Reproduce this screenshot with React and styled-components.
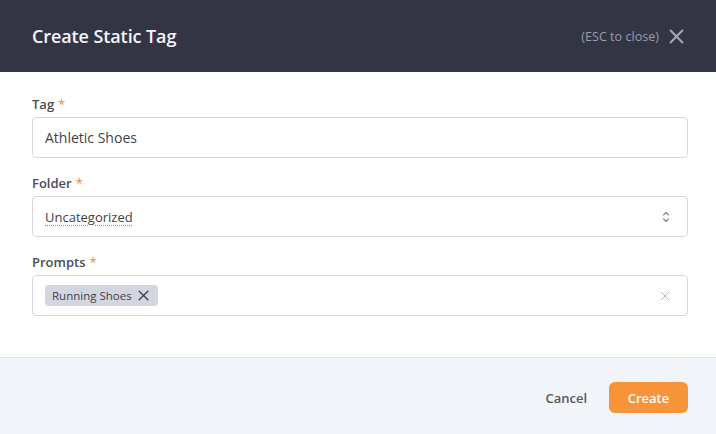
import React from 'react'
import styled, { createGlobalStyle } from 'styled-components'

const GlobalStyle = createGlobalStyle`
  html, body {
    margin: 0;
    padding: 0;
    background: #ffffff;
  }
  body {
    font-family: 'Open Sans', 'Noto Sans', sans-serif;
    -webkit-font-smoothing: antialiased;
  }
`

const Modal = styled.div`
  width: 716px;
  height: 434px;
  display: flex;
  flex-direction: column;
  background: #ffffff;
`

const Header = styled.header`
  height: 72px;
  flex: none;
  display: flex;
  align-items: center;
  justify-content: space-between;
  padding: 0 32px;
  box-sizing: border-box;
  background: #333545;
`

const Title = styled.h2`
  margin: 0;
  font-size: 18px;
  font-weight: 600;
  color: #f4f5f8;
  letter-spacing: -0.1px;
`

const CloseArea = styled.div`
  display: flex;
  align-items: center;
  gap: 10px;
  color: #9a9cab;
  font-size: 12.6px;
`

const CloseButton = styled.button`
  border: 0;
  background: none;
  padding: 0;
  display: flex;
  color: #a3a5b3;
  cursor: pointer;
`

const Body = styled.div`
  flex: 1;
  display: flex;
  flex-direction: column;
  gap: 15px;
  padding: 22px 28px 0 32px;
`

const Field = styled.div`
  display: flex;
  flex-direction: column;
  gap: 3px;
`

const Label = styled.label`
  font-size: 13px;
  line-height: 20px;
  font-weight: 600;
  color: #4b4c58;

  & > span {
    color: #f29a5e;
    margin-left: 4px;
  }
`

const Box = styled.div`
  height: 41px;
  box-sizing: border-box;
  border: 1px solid #d6d6db;
  border-radius: 4px;
  display: flex;
  align-items: center;
  justify-content: space-between;
  padding: 0 ${p => (p.$tight ? '17px' : '12px')} 0 12px;
  font-size: ${p => (p.$small ? '13px' : '14px')};
  color: #3f4049;
`

const Misspelled = styled.span`
  text-decoration: underline dotted #e8736b;
  text-underline-offset: 3px;
`

const Chip = styled.span`
  display: inline-flex;
  align-items: center;
  gap: 6px;
  height: 21px;
  padding: 0 9px 0 7px;
  border-radius: 4px;
  background: #d3d6e0;
  color: #3f4049;
  font-size: 11.5px;
`

const IconSlot = styled.span`
  display: flex;
  color: ${p => p.$color || '#9ea0aa'};
`

const Footer = styled.footer`
  height: 77px;
  flex: none;
  box-sizing: border-box;
  border-top: 1px solid #e2e5ea;
  background: #f1f4f8;
  display: flex;
  align-items: center;
  justify-content: flex-end;
  gap: 22px;
  padding: 3px 28px 0;
`

const TextButton = styled.button`
  border: 0;
  background: none;
  padding: 0;
  font-family: inherit;
  font-size: 13px;
  font-weight: 600;
  color: #555662;
`

const PrimaryButton = styled.button`
  border: 0;
  height: 31px;
  width: 79px;
  border-radius: 6px;
  background: #f7943a;
  color: #ffffff;
  font-family: inherit;
  font-size: 13px;
  font-weight: 600;
`

const XIcon = ({ size = 14, width = 2 }) => (
  <svg width={size} height={size} viewBox="0 0 14 14" fill="none" stroke="currentColor" strokeWidth={width} strokeLinecap="round">
    <path d="M1.5 1.5L12.5 12.5M12.5 1.5L1.5 12.5" />
  </svg>
)

const UpDown = () => (
  <svg width="8" height="12" viewBox="0 0 8 12" fill="none" stroke="currentColor" strokeWidth="1.1" strokeLinecap="round" strokeLinejoin="round">
    <path d="M1.5 4L4 1.5L6.5 4M1.5 8L4 10.5L6.5 8" />
  </svg>
)

export default function App() {
  return (
    <>
      <GlobalStyle />
      <Modal>
        <Header>
          <Title>Create Static Tag</Title>
          <CloseArea>
            (ESC to close)
            <CloseButton aria-label="close">
              <XIcon size={15} width={2} />
            </CloseButton>
          </CloseArea>
        </Header>
        <Body>
          <Field>
            <Label>Tag<span>*</span></Label>
            <Box>Athletic Shoes</Box>
          </Field>
          <Field>
            <Label>Folder<span>*</span></Label>
            <Box $tight $small>
              <Misspelled>Uncategorized</Misspelled>
              <IconSlot $color="#7d7f8a"><UpDown /></IconSlot>
            </Box>
          </Field>
          <Field>
            <Label>Prompts<span>*</span></Label>
            <Box $tight>
              <Chip>
                Running Shoes
                <IconSlot $color="#3f4049"><XIcon size={11} width={1.7} /></IconSlot>
              </Chip>
              <IconSlot><XIcon size={10} width={1.1} /></IconSlot>
            </Box>
          </Field>
        </Body>
        <Footer>
          <TextButton>Cancel</TextButton>
          <PrimaryButton>Create</PrimaryButton>
        </Footer>
      </Modal>
    </>
  )
}
